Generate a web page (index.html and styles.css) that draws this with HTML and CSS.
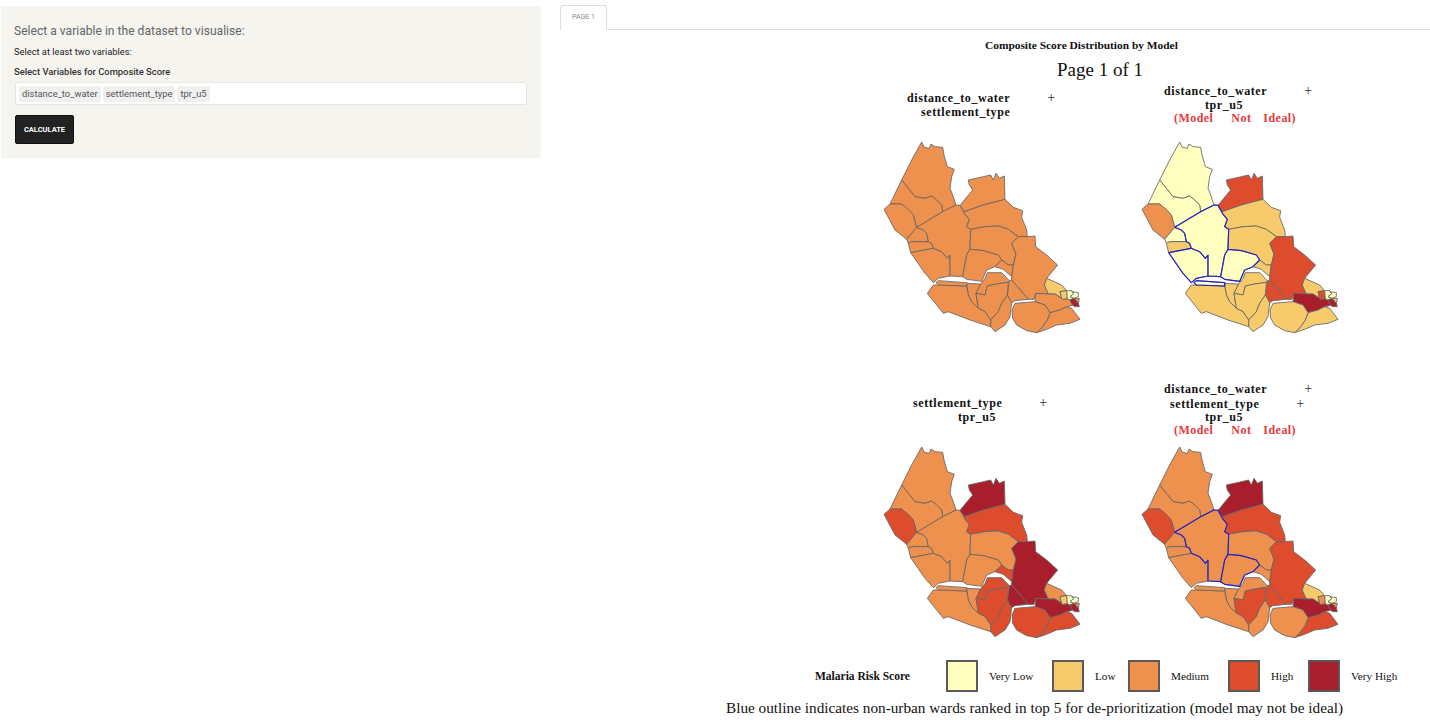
FILE: index.html
```html
<!DOCTYPE html>
<html lang="en">
<head>
<meta charset="utf-8">
<title>Composite Score</title>
<link rel="stylesheet" href="styles.css">
</head>
<body>
<svg class="defs" width="0" height="0" aria-hidden="true">
  <symbol id="wards" viewBox="0 0 690 630">
    <g class="ws">
      <path class="a" d="M155 36L163 52L178 55L183 42L195 50L218 52L222 75L232 110L253 118L245 140L240 175L248 195L258 225L218 245L215 225L200 210L185 198L165 205L135 200L95 150L125 90Z"/>
      <path class="b" d="M95 150L135 200L165 205L185 198L200 210L215 225L218 245L140 292L130 255L95 222L60 222Z"/>
      <path class="c" d="M60 222L95 222L115 238L130 255L140 292L110 328L75 300L42 238Z"/>
      <path class="e" d="M140 292L160 300L170 310L175 335L125 335L115 340L110 328Z"/>
      <path class="f" d="M125 335L175 335L185 340L190 355L122 368L115 340Z"/>
      <path class="g" d="M122 368L190 355L215 365L232 385L240 375L240 438L205 445L190 458L165 430Z"/>
      <path class="d" d="M140 292L218 245L258 225L270 226L283 250L298 268L290 290L302 298L300 358L290 375L278 440L240 438L240 375L232 385L215 365L190 355L185 340L175 335L170 310L160 300Z"/>
      <path class="h" d="M295 150L340 140L362 135L370 150L378 130L388 145L403 138L405 208L340 225L283 245L270 226L308 180L298 165Z"/>
      <path class="i" d="M283 245L340 225L405 208L430 232L458 242L455 262L470 300L472 320L445 320L415 298L385 288L345 290L302 298L290 290L298 268L283 250Z"/>
      <path class="j" d="M302 298L345 290L385 288L415 298L445 320L425 340L438 372L430 405L415 405L395 390L385 375L340 362L300 358Z"/>
      <path class="k" d="M300 358L340 362L385 375L395 390L375 410L350 420L335 454L290 448L278 440L290 375Z"/>
      <path class="l" d="M375 410L395 390L415 405L430 405L425 440L400 418Z"/>
      <path class="m" d="M445 320L472 320L495 318L497 350L530 375L563 405L530 445L523 465L535 492L497 490L492 508L475 508L425 450L425 440L430 405L438 372L425 340Z"/>
      <path class="o" d="M530 445L575 465L590 482L570 485L575 505L555 492L535 492L523 465Z"/>
      <path class="n" d="M425 450L475 508L435 512L425 518L412 495L418 452Z"/>
      <path class="p" d="M497 490L535 492L555 492L575 505L578 508L592 506L600 510L608 526L590 530L570 540L540 548L525 525L495 515Z"/>
      <path class="q" d="M540 548L570 540L590 530L605 535L630 568L600 580L560 585L530 598L500 608L518 590L532 570Z"/>
      <path class="r" d="M435 520L495 515L525 525L540 548L532 570L518 590L500 608L470 602L440 585L428 565L426 540Z"/>
      <path class="t" d="M290 460L332 462L318 490L325 535L305 515L295 495Z"/>
      <path class="u" d="M332 462L345 445L352 428L395 428L418 452L415 457L380 462L352 468L345 495L318 490Z"/>
      <path class="v" d="M318 490L345 495L352 468L380 462L415 457L412 495L395 520L385 545L362 570L345 545L325 535Z"/>
      <path class="w" d="M412 495L425 518L420 560L405 585L375 605L362 590L362 570L385 545L395 520Z"/>
      <path class="s" d="M190 465L205 465L290 468L295 495L305 515L325 535L345 545L362 570L362 590L300 570L235 545L220 550L172 490Z"/>
      <path class="y" d="M198 458L205 452L290 458L290 468L205 465Z"/>
      <path class="t1" d="M570 485L590 482L592 506L578 508L575 505Z"/>
      <path class="t2" d="M590 482L605 482L612 490L600 500L612 505L600 510L592 506Z"/>
      <path class="t3" d="M605 485L625 488L625 500L612 505L600 500L612 490Z"/>
      <path class="t4" d="M612 505L628 505L625 520Z"/>
      <path class="t5" d="M600 510L612 505L625 520L628 530L615 530L608 526Z"/>
    </g>
  </symbol>
</svg>
<div class="app">
  <aside class="panel">
    <h2 class="panel-title">Select a variable in the dataset to visualise:</h2>
    <p class="hint">Select at least two variables:</p>
    <label class="field-label">Select Variables for Composite Score</label>
    <div class="select">
      <span class="tag">distance_to_water</span>
      <span class="tag">settlement_type</span>
      <span class="tag">tpr_u5</span>
    </div>
    <button class="calc" type="button">Calculate</button>
  </aside>
  <main class="main">
    <nav class="tabs"><span class="tab">PAGE 1</span></nav>
    <h1 class="plot-title">Composite Score Distribution by Model</h1>
    <div class="page-no">Page 1 of 1</div>
    <div class="plots">
      <section class="cell">
        <div class="head head1">
          <div class="l1">distance_to_water<span class="plus">+</span></div>
          <div class="l2">settlement_type</div>
        </div>
        <svg class="map m1" viewBox="0 0 690 630"><use href="#wards"/></svg>
      </section>
      <section class="cell">
        <div class="head head2">
          <div class="l1">distance_to_water<span class="plus">+</span></div>
          <div class="l2">tpr_u5</div>
          <div class="bad">(Model<span class="sp"></span>Not<span class="sp2"></span>Ideal)</div>
        </div>
        <svg class="map m2" viewBox="0 0 690 630"><use href="#wards"/>
          <path class="blue" d="M140 292L218 245L258 225L270 226L283 250L298 268L290 290L302 298L300 358L340 362L385 375L395 390L375 410L350 420L335 454L290 448L278 440L240 438L205 445L190 458L165 430L122 368L190 355L185 340L175 335L170 310L160 300L140 292M190 355L215 365L232 385L240 375L240 438M300 358L290 375L278 440M198 458L205 452L290 458L290 468L205 465Z"/>
        </svg>
      </section>
      <section class="cell">
        <div class="head head3">
          <div class="l1">settlement_type<span class="plus">+</span></div>
          <div class="l2">tpr_u5</div>
        </div>
        <svg class="map m3" viewBox="0 0 690 630"><use href="#wards"/></svg>
      </section>
      <section class="cell">
        <div class="head head4">
          <div class="l1">distance_to_water<span class="plus">+</span></div>
          <div class="l1b">settlement_type<span class="plus">+</span></div>
          <div class="l2">tpr_u5</div>
          <div class="bad">(Model<span class="sp"></span>Not<span class="sp2"></span>Ideal)</div>
        </div>
        <svg class="map m4" viewBox="0 0 690 630"><use href="#wards"/>
          <path class="blue" d="M140 292L218 245L258 225L270 226L283 250L298 268L290 290L302 298L300 358L340 362L385 375L395 390L375 410L350 420L335 454L290 448L278 440L240 438L240 375L232 385L215 365L190 355L185 340L175 335L170 310L160 300ZM300 358L290 375L278 440"/>
        </svg>
      </section>
    </div>
    <div class="legend">
      <strong class="legend-title">Malaria Risk Score</strong>
      <div class="item i1"><span class="sw vl"></span>Very Low</div>
      <div class="item i2"><span class="sw lo"></span>Low</div>
      <div class="item i3"><span class="sw me"></span>Medium</div>
      <div class="item i4"><span class="sw hi"></span>High</div>
      <div class="item"><span class="sw vh"></span>Very High</div>
    </div>
    <p class="note">Blue outline indicates non-urban wards ranked in top 5 for de-prioritization (model may not be ideal)</p>
  </main>
</div>
</body>
</html>
```
FILE: styles.css
```css
:root {
  --vl: #ffffbf;
  --lo: #f7cb6c;
  --me: #ee914f;
  --hi: #dd4c2d;
  --vh: #a91e2c;
}
* { box-sizing: border-box; }
html, body { margin: 0; height: 100%; background: #fff; overflow: hidden; }
body { font-family: Roboto, sans-serif; }
.defs { position: absolute; }

.app { display: flex; align-items: flex-start; height: 728px; }

.panel {
  width: 540px;
  height: 152px;
  margin: 6px 0 0 1px;
  padding: 18px 13px 0;
  background: #f5f4ef;
  flex: none;
}
.panel-title { margin: 0; font-size: 12.1px; line-height: 15px; font-weight: 400; color: #666; }
.hint { margin: 6px 0 0; font-size: 9.3px; line-height: 13px; color: #222; }
.field-label { display: block; margin-top: 7px; font-size: 9.4px; line-height: 13px; font-weight: 500; color: #333; }
.select {
  display: flex;
  align-items: center;
  gap: 2px;
  width: 512px;
  height: 23px;
  margin: 4px 0 0 1px;
  padding: 0 3px;
  background: #fff;
  border: 1px solid #e6e6e4;
  border-radius: 2px;
}
.tag {
  padding: 1px 3px;
  font-size: 9.4px;
  line-height: 14px;
  background: #f0f0ee;
  color: #555;
  border-radius: 2px;
}
.calc {
  display: block;
  width: 59px;
  height: 29px;
  margin: 10px 0 0 1px;
  padding: 0;
  background: #222;
  border: 1px solid #111;
  border-radius: 2px;
  color: #fff;
  font: 700 7.5px Roboto, sans-serif;
  text-transform: uppercase;
}

.main { flex: 1; margin-left: 19px; min-width: 0; }
.tabs { height: 30px; padding-top: 5px; border-bottom: 1px solid #ddd; }
.tab {
  display: block;
  width: 47px;
  height: 25px;
  background: #fff;
  border: 1px solid #ddd;
  border-bottom-color: #fff;
  border-radius: 3px 3px 0 0;
  font-size: 7px;
  line-height: 23px;
  text-align: center;
  color: #888;
}

.plot-title, .page-no, .head, .legend, .note { font-family: "Liberation Serif", serif; color: #111; }
.plot-title { margin: 8px 0 0; padding-left: 425px; font-size: 11.4px; line-height: 14px; font-weight: 700; white-space: nowrap; }
.page-no { margin-top: 6px; padding-left: 497px; font-size: 19px; line-height: 24px; white-space: nowrap; }

.plots {
  display: grid;
  grid-template-columns: 257.6px 230px;
  grid-auto-rows: 258px;
  row-gap: 47px;
  padding-left: 310px;
}
.cell { display: flex; flex-direction: column; }
.head {
  display: flex;
  flex-direction: column;
  justify-content: center;
  height: 45px;
  padding-top: 1px;
  font-size: 12px;
  line-height: 13.4px;
  font-weight: 700;
  letter-spacing: 0.58px;
  white-space: nowrap;
}
.plus { font-size: 14px; line-height: 1; font-weight: 400; margin-left: 37px; color: #333; }
.head1 { padding-left: 37px; }
.head1 .l2 { padding-left: 14px; }
.head2 { padding-left: 36.4px; }
.head2 .l2 { padding-left: 41px; }
.head3 { padding-left: 43px; }
.head3 .l2 { padding-left: 45px; }
.head4 { padding-left: 36.4px; }
.head4 .l1b { padding-left: 6px; }
.head4 .l2 { padding-left: 41px; }
.bad { padding-left: 10px; color: #e8383a; letter-spacing: 0.45px; }
.sp { display: inline-block; width: 18px; }
.sp2 { display: inline-block; width: 12px; }

.map { display: block; width: 230px; height: 210px; margin-top: 3px; overflow: visible; filter: blur(0.3px); }
.ws path { stroke: #666; stroke-width: 2.6; stroke-linejoin: round; }
.blue { fill: none; stroke: #2222cc; stroke-width: 3.5; stroke-linejoin: round; }

.a { fill: var(--a, var(--base)); } .b { fill: var(--b, var(--base)); } .c { fill: var(--c, var(--base)); }
.d { fill: var(--d, var(--base)); } .e { fill: var(--e, var(--base)); } .f { fill: var(--f, var(--base)); }
.g { fill: var(--g, var(--base)); } .h { fill: var(--h, var(--base)); } .i { fill: var(--i, var(--base)); }
.j { fill: var(--j, var(--base)); } .k { fill: var(--k, var(--base)); } .l { fill: var(--l, var(--base)); }
.m { fill: var(--m, var(--base)); } .n { fill: var(--n, var(--base)); } .o { fill: var(--o, var(--base)); }
.p { fill: var(--p, var(--base)); } .q { fill: var(--q, var(--base)); } .r { fill: var(--r, var(--base)); }
.s { fill: var(--s, var(--base)); } .t { fill: var(--t, var(--base)); } .u { fill: var(--u, var(--base)); }
.v { fill: var(--v, var(--base)); } .w { fill: var(--w, var(--base)); } .y { fill: var(--y, var(--base)); }
.t1 { fill: var(--t1, var(--lo)); } .t2 { fill: var(--t2, var(--vl)); } .t3 { fill: var(--t3, var(--vl)); }
.t4 { fill: var(--t4, var(--me)); } .t5 { fill: var(--t5, var(--vh)); }

.m1 { --base: var(--me); --o: var(--lo); }
.m2 {
  --base: var(--lo);
  --a: var(--vl); --b: var(--vl); --c: var(--me); --d: var(--vl); --e: var(--vl); --g: var(--vl);
  --k: var(--vl); --y: var(--vl); --h: var(--hi); --m: var(--hi); --n: var(--hi); --p: var(--vh);
  --t1: var(--hi); --t4: var(--lo);
}
.m3 {
  --base: var(--me);
  --c: var(--hi); --h: var(--vh); --i: var(--hi); --l: var(--hi); --m: var(--vh); --n: var(--vh);
  --p: var(--vh); --q: var(--hi); --r: var(--hi); --u: var(--hi); --v: var(--hi); --w: var(--hi);
  --t1: var(--lo);
}
.m4 {
  --base: var(--me);
  --c: var(--hi); --h: var(--vh); --i: var(--hi); --m: var(--hi); --n: var(--hi); --o: var(--lo);
  --p: var(--vh); --q: var(--hi); --v: var(--hi); --t1: var(--me);
}

.legend {
  display: flex;
  align-items: center;
  height: 32px;
  margin-top: 15px;
  padding-left: 255px;
  font-size: 11.2px;
}
.legend-title { width: 131px; flex: none; font-size: 11.5px; }
.item { display: flex; align-items: center; gap: 11px; flex: none; }
.i1 { width: 106px; }
.i2 { width: 76px; }
.i3 { width: 100px; }
.i4 { width: 80px; }
.sw { display: block; width: 32px; height: 32px; border: 2px solid #5a5a5a; }
.vl { background: var(--vl); }
.lo { background: var(--lo); }
.me { background: var(--me); }
.hi { background: var(--hi); }
.vh { background: var(--vh); }

.note { margin: 7px 0 0; padding-left: 166px; font-size: 15.25px; line-height: 18px; white-space: nowrap; }
```
